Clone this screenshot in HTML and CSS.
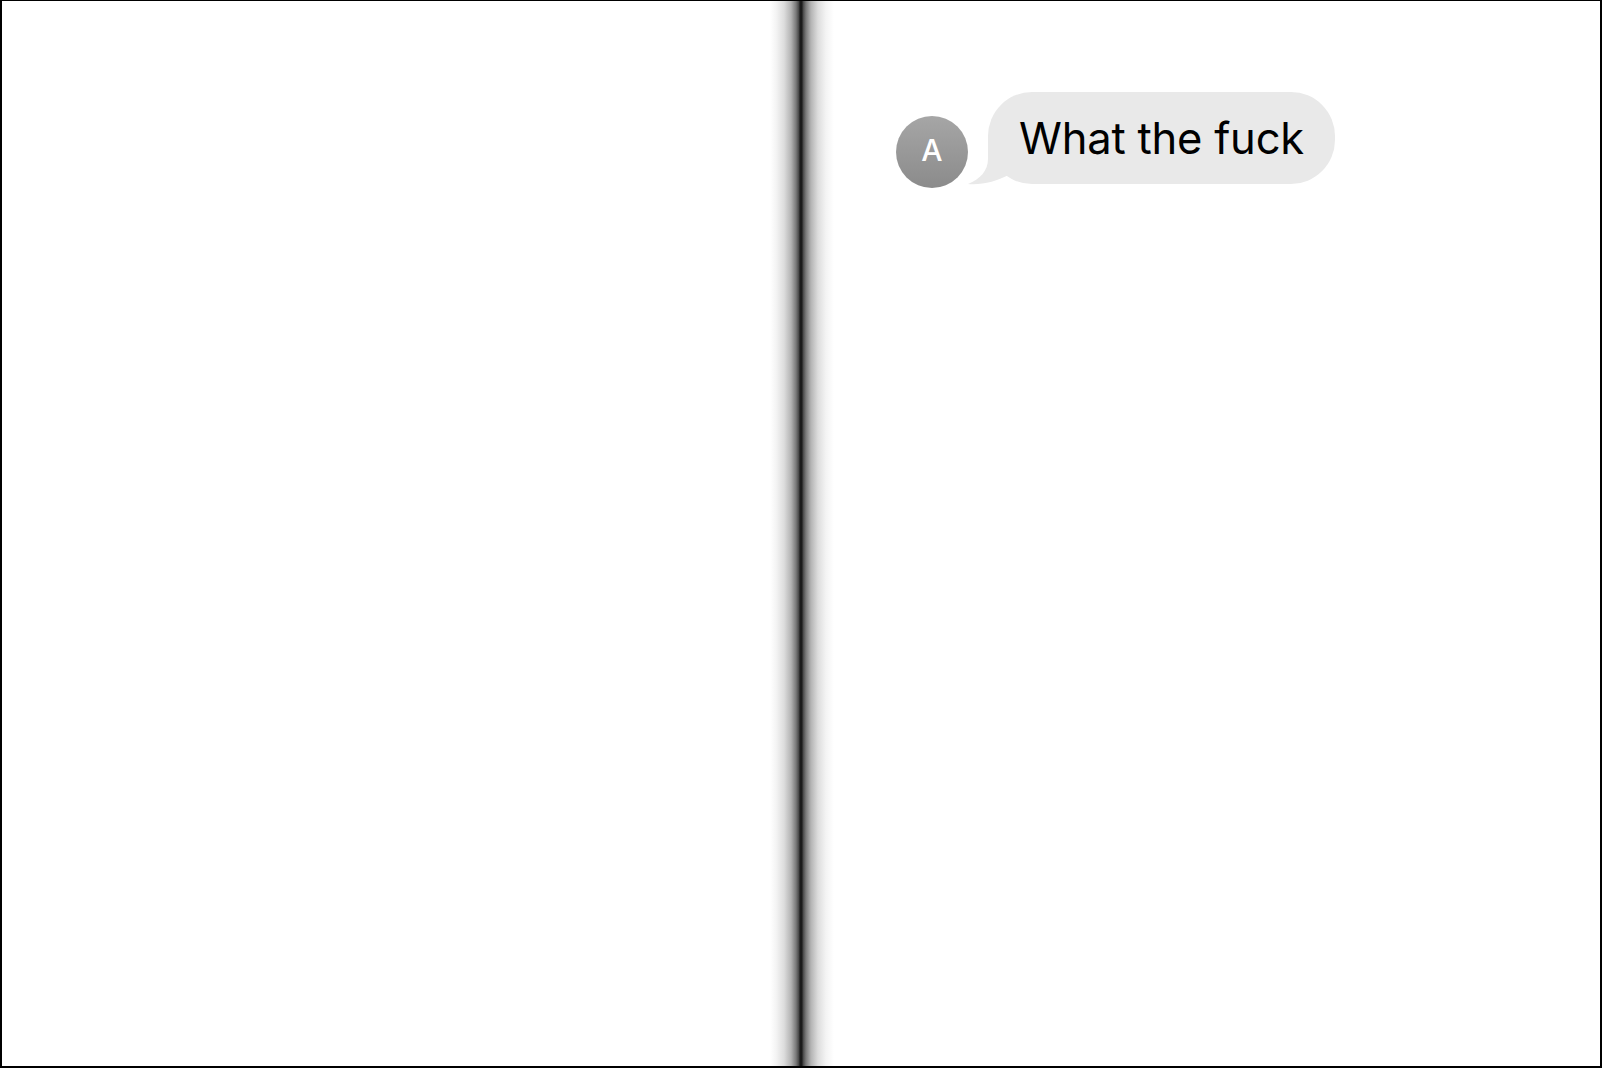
FILE: index.html
```html
<!DOCTYPE html>
<html>
<head>
<meta charset="utf-8">
<link rel="stylesheet" href="styles.css">
</head>
<body>
<div class="frame">
  <div class="pane-left"></div>
  <div class="divider"></div>
  <div class="pane-right">
    <div class="message-row">
      <div class="avatar">A</div>
      <div class="bubble">
        <svg class="tail" width="50" height="46" viewBox="0 0 50 46"><path d="M20 0 L20 20 C20 32 12 40 0 45 C14 46 28 43 42 35 L42 0 Z" fill="#e9e9e9"/></svg>
        <span class="bubble-text">What the fuck</span>
      </div>
    </div>
  </div>
</div>
</body>
</html>
```
FILE: styles.css
```css
html, body {
  margin: 0;
  padding: 0;
  background: #fff;
}
.frame {
  box-sizing: border-box;
  width: 1602px;
  height: 1068px;
  border: 2px solid #000;
  border-top-width: 1px;
  display: flex;
  background: #fff;
}
.pane-left {
  width: 768px;
  flex: none;
}
.divider {
  width: 64px;
  flex: none;
  background: linear-gradient(to right,
    #ffffff 0px,
    #f4f4f4 6px,
    #dddddd 14px,
    #b4b4b4 21px,
    #7a7a7a 26px,
    #454545 29px,
    #1a1a1a 30px,
    #1a1a1a 32px,
    #454545 33px,
    #7a7a7a 36px,
    #b4b4b4 41px,
    #dddddd 48px,
    #f4f4f4 56px,
    #ffffff 64px);
}
.pane-right {
  flex: 1;
  padding: 91px 0 0 62px;
}
.message-row {
  display: flex;
  align-items: flex-end;
  gap: 20px;
}
.avatar {
  box-sizing: border-box;
  width: 72px;
  height: 72px;
  padding-bottom: 5px;
  border-radius: 50%;
  background: linear-gradient(to bottom, #a6a6a6, #8b8b8b);
  color: #fff;
  font-family: Inter, "Liberation Sans", sans-serif;
  font-size: 30px;
  font-weight: 500;
  display: flex;
  align-items: center;
  justify-content: center;
  flex: none;
}
.bubble {
  position: relative;
  background: #e9e9e9;
  border-radius: 44px;
  height: 92px;
  margin-bottom: 4px;
  padding: 0 31px 0 31px;
  display: flex;
  align-items: center;
}
.tail {
  position: absolute;
  left: -20px;
  bottom: -1px;
}
.bubble-text {
  position: relative;
  font-family: Inter, "Liberation Sans", sans-serif;
  font-size: 43.5px;
  color: #000;
  letter-spacing: -0.2px;
}
```
